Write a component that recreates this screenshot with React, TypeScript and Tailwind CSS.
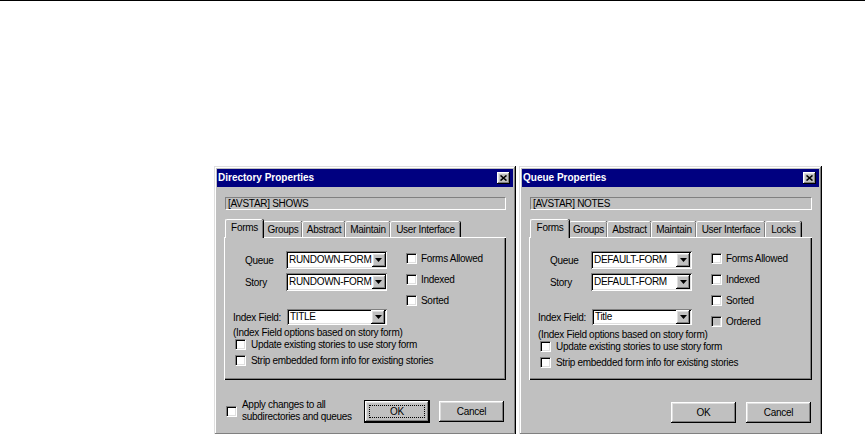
import React from "react";

const RAISED =
  "shadow-[inset_-1px_-1px_#000,inset_1px_1px_#fff,inset_-2px_-2px_#808080,inset_2px_2px_#dfdfdf]";

function CheckBox({ label, disabled, className = "" }: { label: string; disabled?: boolean; className?: string }) {
  return (
    <div className={"flex items-center h-[11px] leading-[11px] " + className}>
      <div
        className={
          "w-[11px] h-[11px] shrink-0 border border-t-[#808080] border-l-[#808080] border-b-white border-r-white shadow-[inset_1px_1px_#000,inset_-1px_-1px_#dfdfdf] " +
          (disabled ? "bg-[#c0c0c0]" : "bg-white")
        }
      />
      <span className="ml-[4px] whitespace-nowrap">{label}</span>
    </div>
  );
}

function Arrow() {
  return (
    <div className={"w-[14px] h-[14px] shrink-0 bg-[#c0c0c0] flex items-center justify-center " + RAISED}>
      <svg width="7" height="4" viewBox="0 0 7 4">
        <path d="M0 0h7L3.5 4z" fill="#000" />
      </svg>
    </div>
  );
}

function Combo({ value, w, h }: { value: string; w: string; h: string }) {
  return (
    <div
      className={
        w +
        " " +
        h +
        " bg-white flex items-center justify-between pl-[3px] pr-[2px] shadow-[inset_1px_1px_#808080,inset_-1px_-1px_#fff,inset_2px_2px_#000,inset_-2px_-2px_#dfdfdf]"
      }
    >
      <span className="whitespace-nowrap leading-[12px]">{value}</span>
      <Arrow />
    </div>
  );
}

function Button({ label, isDefault, className = "" }: { label: string; isDefault?: boolean; className?: string }) {
  if (isDefault) {
    return (
      <div className={"border border-black " + className}>
        <div className={"relative w-[64px] h-[21px] bg-[#c0c0c0] flex items-center justify-center " + RAISED}>
          <div className="absolute inset-[4px] border border-dotted border-black" />
          <span className="leading-[12px]">{label}</span>
        </div>
      </div>
    );
  }
  return (
    <div className={"w-[65px] h-[21px] bg-[#c0c0c0] flex items-center justify-center " + RAISED + " " + className}>
      <span className="leading-[12px]">{label}</span>
    </div>
  );
}

type Tab = { label: string; w: string };

function Dialog({
  title,
  path,
  tabs,
  value,
  indexValue,
  ordered,
  apply,
  width,
}: {
  title: string;
  path: string;
  tabs: Tab[];
  value: string;
  indexValue: string;
  ordered?: boolean;
  apply?: boolean;
  width: string;
}) {
  return (
    <div
      className={
        width +
        " h-[269px] bg-[#c0c0c0] p-[3px] flex flex-col shadow-[inset_-1px_-1px_#000,inset_1px_1px_#dfdfdf,inset_-2px_-2px_#808080,inset_2px_2px_#fff]"
      }
    >
      <div className="h-[18px] bg-[#000080] flex items-center justify-between pl-[1px] pr-[3px]">
        <span className="text-white font-bold text-[10px] leading-[12px] tracking-normal">{title}</span>
        <div className={"w-[13px] h-[12px] bg-[#c0c0c0] flex items-center justify-center " + RAISED}>
          <svg width="7" height="6" viewBox="0 0 7 6">
            <path d="M0.5 0.5L6.5 5.5M6.5 0.5L0.5 5.5" stroke="#000" strokeWidth="1.6" />
          </svg>
        </div>
      </div>
      <div className="flex flex-col px-[7px]">
        <div className="mt-[10px] ml-[1px] h-[13px] border border-t-[#808080] border-l-[#808080] border-b-white border-r-white flex items-center pl-[2px] leading-[11px]">
          {path}
        </div>
        <div className="mt-[9px] flex items-end h-[18px] pl-[1px]">
          {tabs.map((t, i) => (
            <div
              key={t.label}
              className={
                t.w +
                " flex items-center justify-center rounded-t-[2px] border-l border-t border-white bg-[#c0c0c0] shadow-[inset_-1px_0_#808080,1px_0_#000] " +
                (i === 0 ? "relative z-10 h-[19px] -mb-px pb-[2px]" : "h-[16px]")
              }
            >
              <span className="leading-[12px] whitespace-nowrap">{t.label}</span>
            </div>
          ))}
        </div>
        <div className="h-[143px] bg-[#c0c0c0] shadow-[inset_1px_1px_#fff,inset_-1px_-1px_#000,inset_-2px_-2px_#808080] flex flex-col">
          <div className="flex pt-[14px]">
            <div className="w-[182px] shrink-0 flex flex-col">
              <div className="flex items-center pl-[21px]">
                <span className="w-[41px]">Queue</span>
                <Combo value={value} w="w-[101px]" h="h-[18px]" />
              </div>
              <div className="flex items-center pl-[21px] mt-[4px]">
                <span className="w-[41px]">Story</span>
                <Combo value={value} w="w-[101px]" h="h-[18px]" />
              </div>
              <div className="flex items-center pl-[9px] mt-[18px]">
                <span className="w-[54px] whitespace-nowrap">Index Field:</span>
                <Combo value={indexValue} w="w-[100px]" h="h-[16px]" />
              </div>
            </div>
            <div className="flex flex-col pt-[2px] gap-[10px]">
              <CheckBox label="Forms Allowed" />
              <CheckBox label="Indexed" />
              <CheckBox label="Sorted" />
              {ordered && <CheckBox label="Ordered" disabled />}
            </div>
          </div>
          <div className="pl-[9px] leading-[12px] whitespace-nowrap mt-[2px]">
            (Index Field options based on story form)
          </div>
          <CheckBox label="Update existing stories to use story form" className="ml-[11px] [&>span]:ml-[5px]" />
          <CheckBox label="Strip embedded form info for existing stories" className="ml-[11px] mt-[5px] [&>span]:ml-[5px]" />
        </div>
        {apply ? (
          <div className="flex items-start mt-[20px]">
            <div className="flex items-start ml-[2px]">
              <div className="mt-[6px] w-[11px] h-[11px] shrink-0 bg-white border border-t-[#808080] border-l-[#808080] border-b-white border-r-white shadow-[inset_1px_1px_#000,inset_-1px_-1px_#dfdfdf]" />
              <div className="ml-[5px] leading-[12px] -mt-[1px]">
                Apply changes to all
                <br />
                subdirectories and queues
              </div>
            </div>
            <div className="ml-auto flex items-start pr-[2px]">
              <Button label="OK" isDefault />
              <Button label="Cancel" className="ml-[9px] mt-[1px] w-[64px]" />
            </div>
          </div>
        ) : (
          <div className="flex justify-end mt-[22px] pr-[1px]">
            <Button label="OK" />
            <Button label="Cancel" className="ml-[10px]" />
          </div>
        )}
      </div>
    </div>
  );
}

export default function App() {
  return (
    <div className="w-[865px] h-[434px] bg-white overflow-hidden text-[10px] tracking-[-0.3px] text-black font-['Liberation_Sans',Arial,sans-serif]">
      <div className="h-[1px] bg-black" />
      <div className="flex ml-[214px] mt-[165px] gap-[3px]">
        <Dialog
          title="Directory Properties"
          path="[AVSTAR] SHOWS"
          value="RUNDOWN-FORM"
          indexValue="TITLE"
          width="w-[302px]"
          apply
          tabs={[
            { label: "Forms", w: "w-[38px]" },
            { label: "Groups", w: "w-[39px]" },
            { label: "Abstract", w: "w-[43px]" },
            { label: "Maintain", w: "w-[45px]" },
            { label: "User Interface", w: "w-[70px]" },
          ]}
        />
        <Dialog
          title="Queue Properties"
          path="[AVSTAR] NOTES"
          value="DEFAULT-FORM"
          indexValue="Title"
          width="w-[303px]"
          ordered
          tabs={[
            { label: "Forms", w: "w-[39px]" },
            { label: "Groups", w: "w-[38px]" },
            { label: "Abstract", w: "w-[44px]" },
            { label: "Maintain", w: "w-[45px]" },
            { label: "User Interface", w: "w-[69px]" },
            { label: "Locks", w: "w-[36px]" },
          ]}
        />
      </div>
    </div>
  );
}
